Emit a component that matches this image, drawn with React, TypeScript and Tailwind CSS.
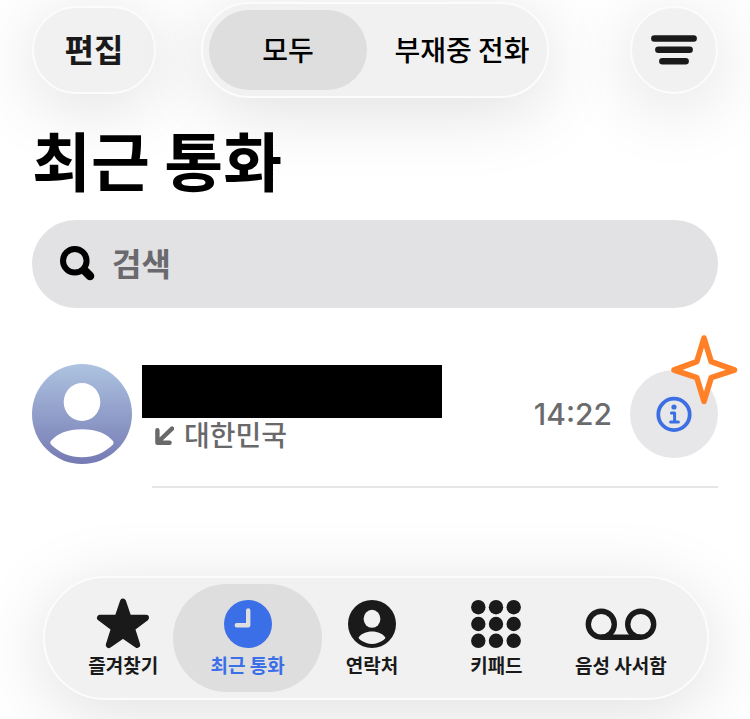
import React, { useState } from 'react';

const StarIcon = () => (
  <svg viewBox="0 0 54 52" className="w-[54px] h-[52px]" fill="currentColor" stroke="currentColor" strokeWidth="6" strokeLinejoin="round">
    <path d="M27 3.5 L32.4 19.4 L50 19.8 L36 30.4 L41.2 47 L27 37.3 L12.8 47 L18 30.4 L4 19.8 L21.6 19.4 Z" />
  </svg>
);

const ClockIcon = () => (
  <svg viewBox="0 0 48 52" className="w-12 h-[52px]" fill="none">
    <circle cx="24" cy="26" r="24" fill="currentColor" />
    <path d="M24.2 12.4 V27.2 H12.8" stroke="#dedede" strokeWidth="4.4" strokeLinecap="round" strokeLinejoin="round" />
  </svg>
);

const ContactIcon = () => (
  <svg viewBox="0 0 48 52" className="w-12 h-[52px]">
    <circle cx="24" cy="26" r="24" fill="currentColor" />
    <ellipse cx="24" cy="20.8" rx="8.4" ry="9" fill="#f1f1f1" />
    <path d="M10.6 39.6 C13 36 18 33.6 24 33.6 C30 33.6 35 36 37.4 39.6 C38 40.5 32 46 24 46 C16 46 10 40.5 10.6 39.6 Z" fill="#f1f1f1" />
  </svg>
);

const KeypadIcon = () => (
  <svg viewBox="0 0 50 52" className="w-[50px] h-[52px]" fill="currentColor">
    {[9.2, 26, 42.8].map((y) =>
      [7.3, 25, 42.7].map((x) => <circle key={`${x}-${y}`} cx={x} cy={y} r="7.2" />)
    )}
  </svg>
);

const VoicemailIcon = () => (
  <svg viewBox="0 0 72 52" className="w-[72px] h-[52px]" fill="none" stroke="currentColor" strokeWidth="5.4">
    <circle cx="16.3" cy="26.2" r="13" />
    <circle cx="55.7" cy="26.2" r="13" />
    <path d="M16.3 39.2 H55.7" />
  </svg>
);

const tabs = [
  { id: 'favorites', label: '즐겨찾기', icon: <StarIcon /> },
  { id: 'recents', label: '최근 통화', icon: <ClockIcon /> },
  { id: 'contacts', label: '연락처', icon: <ContactIcon /> },
  { id: 'keypad', label: '키패드', icon: <KeypadIcon /> },
  { id: 'voicemail', label: '음성 사서함', icon: <VoicemailIcon /> },
];

const glass = 'bg-[#f1f1f1] border-2 border-[#fcfcfc] rounded-full shadow-[0_12px_72px_rgba(0,0,0,0.13)]';

function Header() {
  const [filter, setFilter] = useState('all');

  return (
    <header className="grid grid-cols-[1fr_auto_1fr] items-center pt-[2px]">
      <button type="button" className={`${glass} w-[124px] h-[88px] pb-1 text-[32px] leading-none font-bold text-[#1a1a1a]`}>
        편집
      </button>
      <div className={`${glass} flex p-[6px] text-[28px] leading-none font-medium text-black`}>
        <button
          type="button"
          aria-pressed={filter === 'all'}
          onClick={() => setFilter('all')}
          className="w-[158px] h-20 pb-[2px] rounded-full aria-pressed:bg-[#dedede]"
        >
          모두
        </button>
        <button
          type="button"
          aria-pressed={filter === 'missed'}
          onClick={() => setFilter('missed')}
          className="w-[174px] h-20 pl-4 pb-[2px] rounded-full whitespace-nowrap aria-pressed:bg-[#dedede]"
        >
          부재중 전화
        </button>
      </div>
      <button type="button" aria-label="필터" className={`${glass} w-[88px] h-[88px] justify-self-end flex items-center justify-center text-[#1a1a1a]`}>
        <svg viewBox="0 0 46 30" className="w-[46px] h-[30px]" fill="none" stroke="currentColor" strokeWidth="6.6" strokeLinecap="round">
          <path d="M3.4 3.5 H42.6 M7.4 14.8 H38.6 M11.4 26.2 H34.6" />
        </svg>
      </button>
    </header>
  );
}

function SearchBar() {
  return (
    <label className="mt-[22px] flex items-center h-[88px] px-7 rounded-full bg-[#e2e2e4]">
      <svg viewBox="0 0 36 36" className="w-9 h-9 shrink-0" fill="none" stroke="black" strokeLinecap="round">
        <circle cx="14.8" cy="14.8" r="11.8" strokeWidth="6" />
        <path d="M24.5 24.5 L30 30" strokeWidth="8.6" />
      </svg>
      <input
        type="text"
        aria-label="검색"
        placeholder="검색"
        className="ml-4 pb-1 flex-1 min-w-0 bg-transparent outline-none text-[32px] leading-10 font-bold text-black placeholder:text-[#69696e]"
      />
    </label>
  );
}

function Avatar() {
  return (
    <svg viewBox="0 0 100 100" className="w-[100px] h-[100px] shrink-0">
      <defs>
        <linearGradient id="avatar" x1="0" y1="0" x2="0" y2="1">
          <stop offset="0" stopColor="#adc3e0" />
          <stop offset="1" stopColor="#757ab3" />
        </linearGradient>
      </defs>
      <circle cx="50" cy="50" r="50" fill="url(#avatar)" />
      <ellipse cx="50" cy="38" rx="18.3" ry="19" fill="white" />
      <path d="M18.8 77 C25 69.5 36 65.2 50 65.2 C64 65.2 75 69.5 81 77 C82 78.5 81.6 80 80.5 81 C72 89 62 93.3 50 93.3 C38 93.3 28 89 19.5 81 C18.2 79.7 17.8 78.3 18.8 77 Z" fill="white" />
    </svg>
  );
}

function RecentCall() {
  return (
    <li>
      <div className="flex items-center">
        <Avatar />
        <div className="ml-[10px] pb-[14px] flex-1 min-w-0 flex flex-col">
          <div className="w-[300px] h-[53px] bg-black" />
          <div className="pl-3 h-8 flex items-center text-[28px] leading-8 font-medium text-[#69696b]">
            <svg viewBox="0 0 20 20" className="w-5 h-5 mt-1 mr-[10px]" fill="none" stroke="currentColor" strokeWidth="4.4" strokeLinecap="round" strokeLinejoin="round">
              <path d="M3.4 4.2 V16.8 H15.6 M18 2.6 L4 16" />
            </svg>
            대한민국
          </div>
        </div>
        <time className="mr-[18px] font-[Inter] text-[30px] leading-8 font-medium text-[#6b6b6d]">14:22</time>
        <div className="relative">
          <button type="button" aria-label="정보" className="w-[88px] h-[88px] rounded-full bg-[#e7e7e9] flex items-center justify-center text-[#3b6fe3]">
            <svg viewBox="0 0 36 36" className="w-9 h-9" fill="none" stroke="currentColor">
              <circle cx="18" cy="18.4" r="15.7" strokeWidth="3.8" />
              <circle cx="18" cy="11" r="2.6" fill="currentColor" stroke="none" />
              <path d="M15.4 17 H18.6 V26 M14.6 26 H22.4" strokeWidth="3" strokeLinecap="round" strokeLinejoin="round" />
            </svg>
          </button>
          <svg viewBox="0 0 68 72" className="absolute -top-9 -right-5 w-[68px] h-[72px]" fill="white" stroke="#ff8027" strokeWidth="5.6" strokeLinejoin="round">
            <path d="M34 4 L41.2 27.6 L64.5 36 L41.2 43.6 L34 67.4 L26.8 43.6 L4 36 L26.8 27.6 Z" />
          </svg>
        </div>
      </div>
      <hr className="mt-[22px] ml-[120px] border-t-2 border-[#e6e6e6]" />
    </li>
  );
}

function TabBar() {
  const [active, setActive] = useState('recents');

  return (
    <nav className={`${glass} mt-auto ml-[11px] mr-[9px] mb-[19px] grid grid-cols-5 py-[6px] pl-4 pr-6`}>
      {tabs.map((tab) => (
        <a
          key={tab.id}
          href={`#${tab.id}`}
          aria-current={active === tab.id ? 'page' : undefined}
          onClick={() => setActive(tab.id)}
          className="-mx-3 h-[108px] pt-[14px] flex flex-col items-center rounded-full text-[19px] leading-6 font-bold whitespace-nowrap text-[#1a1a1a] aria-[current=page]:bg-[#dedede] aria-[current=page]:text-[#3b6fe8]"
        >
          {tab.icon}
          <span className="mt-[3px]">{tab.label}</span>
        </a>
      ))}
    </nav>
  );
}

export default function App() {
  return (
    <div className="min-h-screen px-8 flex flex-col overflow-hidden bg-white font-['Noto_Sans_CJK_KR',sans-serif]">
      <Header />
      <main>
        <h1 className="mt-5 text-[64px] leading-20 font-bold text-black">최근 통화</h1>
        <SearchBar />
        <ul className="mt-14">
          <RecentCall />
        </ul>
      </main>
      <TabBar />
    </div>
  );
}
